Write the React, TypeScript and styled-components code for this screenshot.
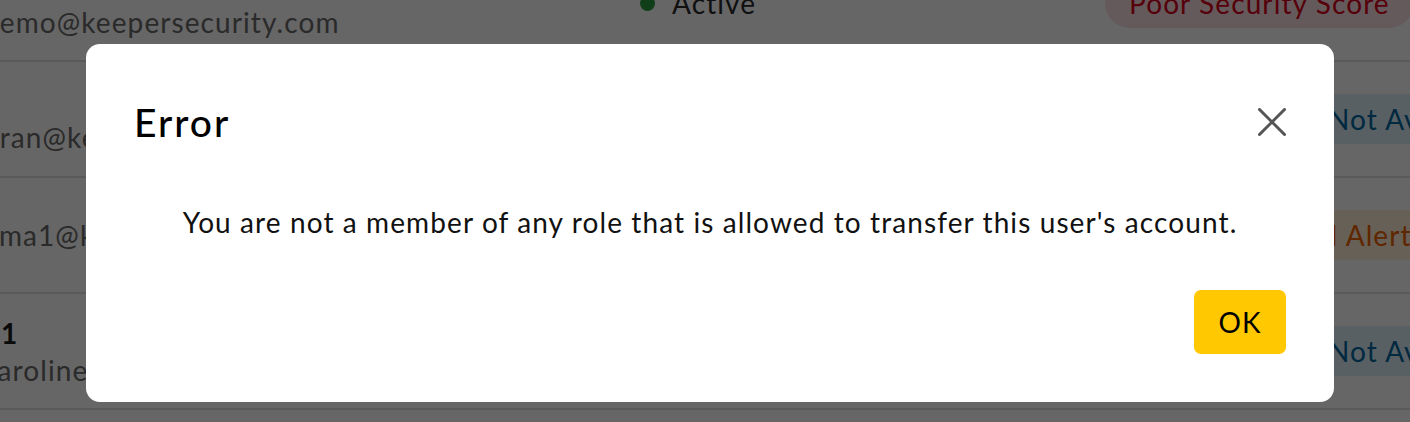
import React from 'react';
import styled, { createGlobalStyle } from 'styled-components';

const GlobalStyle = createGlobalStyle`
  html, body {
    margin: 0;
    padding: 0;
    background: #ffffff;
    overflow: hidden;
    font-family: Lato, 'Liberation Sans', sans-serif;
    letter-spacing: 1.1px;
  }
`;

type Tone = 'red' | 'blue' | 'orange';

type UserRow = {
  name?: string;
  email: string;
  status: string;
  badge: string;
  tone: Tone;
};

const rows: UserRow[] = [
  { name: 'Demo', email: 'demo@keepersecurity.com', status: 'Active', badge: 'Poor Security Score', tone: 'red' },
  { name: '', email: 'bran@keepersecurity.com', status: 'Active', badge: 'Security Score Not Available', tone: 'blue' },
  { email: 'ema1@keepersecurity.com', status: 'Active', badge: 'Weak Password Alert', tone: 'orange' },
  { name: 'T1', email: 'caroline1@keepersecurity.com', status: 'Active', badge: 'Security Score Not Available', tone: 'blue' },
  { email: 'test@keepersecurity.com', status: 'Active', badge: 'Poor Security Score', tone: 'red' },
];

const toneColors: Record<Tone, { bg: string; fg: string }> = {
  red: { bg: '#fde1e3', fg: '#d8001c' },
  blue: { bg: '#dcf1fb', fg: '#00669e' },
  orange: { bg: '#fff0d9', fg: '#f06000' },
};

const App: React.FC = () => {
  return (
    <>
      <GlobalStyle />
      <Table>
        {rows.map((row, idx) => (
          <Row key={idx}>
            <UserCell>
              {row.name !== undefined && <UserName>{row.name}</UserName>}
              <UserEmail>{row.email}</UserEmail>
            </UserCell>
            <StatusCell>
              <StatusDot />
              <StatusText>{row.status}</StatusText>
            </StatusCell>
            <BadgeCell>
              <Badge tone={row.tone}>{row.badge}</Badge>
            </BadgeCell>
          </Row>
        ))}
      </Table>

      <Overlay>
        <Dialog role="dialog" aria-labelledby="error-title">
          <DialogHeader>
            <DialogTitle id="error-title">Error</DialogTitle>
            <CloseButton aria-label="Close">
              <svg width="28" height="28" viewBox="0 0 28 28" fill="none">
                <path d="M1.5 1.5 L26.5 26.5 M26.5 1.5 L1.5 26.5" stroke="#555555" strokeWidth="3" strokeLinecap="round" />
              </svg>
            </CloseButton>
          </DialogHeader>
          <DialogMessage>
            You are not a member of any role that is allowed to transfer this user's account.
          </DialogMessage>
          <DialogFooter>
            <OkButton>OK</OkButton>
          </DialogFooter>
        </Dialog>
      </Overlay>
    </>
  );
};

export default App;

const Table = styled.div`
  margin-top: -54px;
  margin-left: -17px;
  width: 1800px;
`;

const Row = styled.div`
  display: grid;
  grid-template-columns: 657px 465px 1fr;
  align-items: center;
  height: 114px;
  border-bottom: 2px solid #e2e2e2;
`;

const UserCell = styled.div`
  display: flex;
  flex-direction: column;
  gap: 3px;
`;

const UserName = styled.div`
  min-height: 33px;
  font-size: 28px;
  font-weight: 700;
  color: #1a1a1a;
`;

const UserEmail = styled.div`
  font-size: 28px;
  color: #6a6a6a;
`;

const StatusCell = styled.div`
  display: flex;
  align-items: center;
  gap: 17px;
`;

const StatusDot = styled.span`
  width: 15px;
  height: 15px;
  border-radius: 50%;
  background: #279c3f;
`;

const StatusText = styled.span`
  font-size: 28px;
  color: #2a2a2a;
`;

const BadgeCell = styled.div`
  display: flex;
`;

const Badge = styled.span<{ tone: Tone }>`
  display: inline-flex;
  align-items: center;
  height: 50px;
  padding: 0 24px;
  border-radius: 25px;
  font-size: 28px;
  white-space: nowrap;
  background: ${({ tone }) => toneColors[tone].bg};
  color: ${({ tone }) => toneColors[tone].fg};
`;

const Overlay = styled.div`
  position: fixed;
  inset: 0;
  background: rgba(0, 0, 0, 0.6);
  display: flex;
  align-items: flex-start;
  padding: 44px 0 0 86px;
`;

const Dialog = styled.div`
  width: 1248px;
  height: 358px;
  box-sizing: border-box;
  background: #ffffff;
  border-radius: 14px;
  padding: 48px;
  display: flex;
  flex-direction: column;
`;

const DialogHeader = styled.div`
  display: flex;
  align-items: center;
  justify-content: space-between;
  height: 60px;
`;

const DialogTitle = styled.h2`
  margin: 0;
  font-size: 39px;
  font-weight: 500;
  letter-spacing: 2px;
  color: #000000;
`;

const CloseButton = styled.button`
  display: flex;
  padding: 0;
  border: none;
  background: none;
  cursor: pointer;
`;

const DialogMessage = styled.p`
  margin: 50px 0 0;
  line-height: 40px;
  font-size: 28px;
  text-align: center;
  color: #111111;
`;

const DialogFooter = styled.div`
  display: flex;
  justify-content: flex-end;
  margin-top: 48px;
`;

const OkButton = styled.button`
  width: 92px;
  height: 64px;
  border: none;
  border-radius: 7px;
  background: #ffc800;
  font-family: inherit;
  font-size: 28px;
  letter-spacing: 1.1px;
  color: #000000;
  cursor: pointer;
`;
